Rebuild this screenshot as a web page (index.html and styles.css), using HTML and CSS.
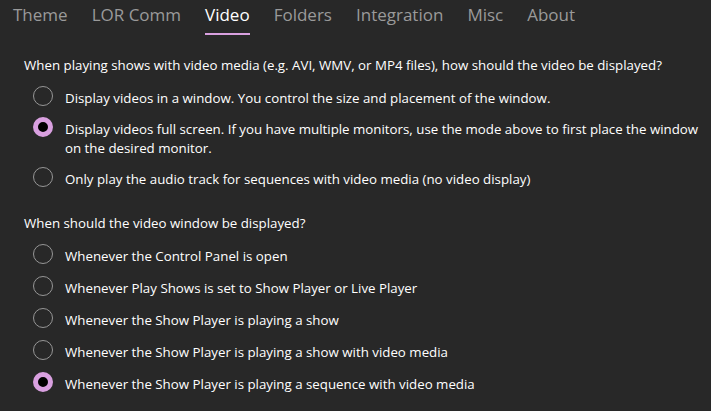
FILE: index.html
```html
<!DOCTYPE html>
<html lang="en">
<head>
    <meta charset="UTF-8">
    <meta name="viewport" content="width=device-width, initial-scale=1.0">
    <title>Settings - Video</title>
    <link rel="stylesheet" href="styles.css">
</head>
<body>
    <nav class="tabs">
        <span class="tab">Theme</span>
        <span class="tab">LOR Comm</span>
        <span class="tab active">Video</span>
        <span class="tab">Folders</span>
        <span class="tab">Integration</span>
        <span class="tab">Misc</span>
        <span class="tab">About</span>
    </nav>
    <div class="content">
        <p class="question">When playing shows with video media (e.g. AVI, WMV, or MP4 files), how should the video be displayed?</p>
        <div class="options">
            <label class="option"><span class="radio"></span><span class="text">Display videos in a window. You control the size and placement of the window.</span></label>
            <label class="option"><span class="radio checked"></span><span class="text">Display videos full screen. If you have multiple monitors, use the mode above to first place the window on the desired monitor.</span></label>
            <label class="option"><span class="radio"></span><span class="text">Only play the audio track for sequences with video media (no video display)</span></label>
        </div>
        <p class="question">When should the video window be displayed?</p>
        <div class="options tight">
            <label class="option"><span class="radio"></span><span class="text">Whenever the Control Panel is open</span></label>
            <label class="option"><span class="radio"></span><span class="text">Whenever Play Shows is set to Show Player or Live Player</span></label>
            <label class="option"><span class="radio"></span><span class="text">Whenever the Show Player is playing a show</span></label>
            <label class="option"><span class="radio"></span><span class="text">Whenever the Show Player is playing a show with video media</span></label>
            <label class="option"><span class="radio checked"></span><span class="text">Whenever the Show Player is playing a sequence with video media</span></label>
        </div>
    </div>
</body>
</html>
```

FILE: styles.css
```css
body {
    margin: 0;
    background-color: #282828;
    color: #ffffff;
    font-family: "Open Sans", "Noto Sans", sans-serif;
    font-size: 13.3px;
    width: 711px;
    height: 411px;
    overflow: hidden;
}
.tabs {
    display: flex;
    gap: 24px;
    padding: 0 0 0 13px;
    height: 36px;
}
.tab {
    font-size: 17px;
    color: #9a9a9a;
    line-height: 30px;
    height: 33px;
    border-bottom: 2px solid transparent;
}
.tab.active {
    color: #ffffff;
    border-bottom-color: #d9a0e0;
}
.content {
    padding: 20px 4px 0 24px;
}
.question {
    margin: 0 0 12px 0;
    line-height: 19px;
}
.options {
    display: flex;
    flex-direction: column;
    gap: 10px;
    margin-bottom: 25px;
}
.options.tight {
    gap: 11px;
}
.option {
    display: flex;
    align-items: flex-start;
    gap: 12px;
    padding-left: 9px;
    line-height: 19px;
}
.radio {
    flex: none;
    width: 18px;
    height: 18px;
    margin-top: -1px;
    border: 1px solid #969696;
    border-radius: 50%;
    box-sizing: content-box;
}
.radio.checked {
    width: 10px;
    height: 10px;
    border: 5px solid #d9a0e0;
    background-color: #000000;
}
.text {
    padding-top: 2px;
}
```
